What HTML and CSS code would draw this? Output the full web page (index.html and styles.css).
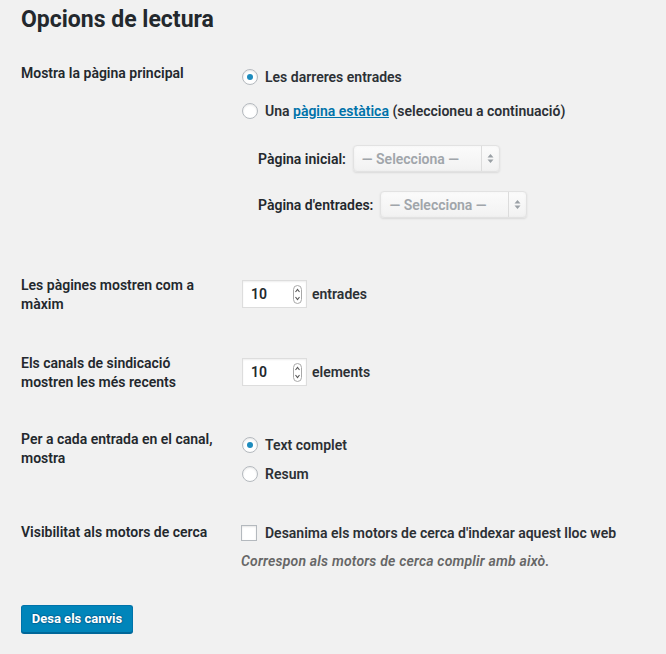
FILE: index.html
```html
<!DOCTYPE html>
<html lang="ca">
<head>
<meta charset="utf-8">
<title>Opcions de lectura</title>
<link rel="stylesheet" href="styles.css">
</head>
<body>
<div class="wrap">
  <h1 class="title">Opcions de lectura</h1>

  <div class="row row-front">
    <div class="th">Mostra la pàgina principal</div>
    <div class="td">
      <div class="opt opt-tall"><span class="radio checked"></span><span>Les darreres entrades</span></div>
      <div class="opt opt-tall"><span class="radio"></span><span>Una <a class="link" href="#">pàgina estàtica</a> (seleccioneu a continuació)</span></div>
      <div class="selrow first">
        <span class="sel-label">Pàgina inicial:</span>
        <span class="select"><span class="sel-text">— Selecciona —</span><span class="sel-arrow"><svg width="7" height="11" viewBox="0 0 7 11"><path d="M3.5 1 L6.5 4.5 H0.5 Z M3.5 10 L6.5 6.5 H0.5 Z" fill="#9aa0a5"/></svg></span></span>
      </div>
      <div class="selrow">
        <span class="sel-label">Pàgina d'entrades:</span>
        <span class="select"><span class="sel-text">— Selecciona —</span><span class="sel-arrow"><svg width="7" height="11" viewBox="0 0 7 11"><path d="M3.5 1 L6.5 4.5 H0.5 Z M3.5 10 L6.5 6.5 H0.5 Z" fill="#9aa0a5"/></svg></span></span>
      </div>
    </div>
  </div>

  <div class="row row-num">
    <div class="th">Les pàgines mostren com a màxim</div>
    <div class="td td-num">
      <span class="num"><span class="num-val">10</span><svg class="spin" width="9" height="19" viewBox="0 0 9 19"><rect x="0.5" y="0.5" width="8" height="18" rx="4" fill="#fff" stroke="#a8a8a8"/><path d="M2.5 7 L4.5 4.5 L6.5 7" fill="none" stroke="#555" stroke-width="1.1"/><path d="M2.5 12 L4.5 14.5 L6.5 12" fill="none" stroke="#555" stroke-width="1.1"/></svg></span>
      <span class="unit">entrades</span>
    </div>
  </div>

  <div class="row row-num row-short">
    <div class="th">Els canals de sindicació mostren les més recents</div>
    <div class="td td-num">
      <span class="num"><span class="num-val">10</span><svg class="spin" width="9" height="19" viewBox="0 0 9 19"><rect x="0.5" y="0.5" width="8" height="18" rx="4" fill="#fff" stroke="#a8a8a8"/><path d="M2.5 7 L4.5 4.5 L6.5 7" fill="none" stroke="#555" stroke-width="1.1"/><path d="M2.5 12 L4.5 14.5 L6.5 12" fill="none" stroke="#555" stroke-width="1.1"/></svg></span>
      <span class="unit">elements</span>
    </div>
  </div>

  <div class="row row-feed">
    <div class="th">Per a cada entrada en el canal, mostra</div>
    <div class="td td-feed">
      <div class="opt"><span class="radio checked"></span><span>Text complet</span></div>
      <div class="opt"><span class="radio"></span><span>Resum</span></div>
    </div>
  </div>

  <div class="row row-vis">
    <div class="th">Visibilitat als motors de cerca</div>
    <div class="td td-vis">
      <div class="opt"><span class="checkbox"></span><span>Desanima els motors de cerca d'indexar aquest lloc web</span></div>
      <p class="desc">Correspon als motors de cerca complir amb això.</p>
    </div>
  </div>

  <div class="submit"><button class="button" type="button">Desa els canvis</button></div>
</div>
</body>
</html>
```

FILE: styles.css
```css
html, body {
  margin: 0;
  padding: 0;
  background: #f1f1f1;
}
body {
  font-family: Roboto, "Liberation Sans", Arial, sans-serif;
  font-size: 14px;
  color: #2c3035;
  font-weight: 600;
}
.wrap {
  padding-left: 21px;
  width: 645px;
}
.title {
  margin: 5px 0 0;
  font-size: 23px;
  line-height: 29px;
  font-weight: 700;
  color: #23282d;
}
.row {
  display: grid;
  grid-template-columns: 220px 1fr;
}
.row-front { margin-top: 10px; }
.th {
  padding: 20px 20px 20px 0;
  line-height: 19px;
  color: #23282d;
}
.row-short .th { padding-bottom: 18px; }
.td { padding-top: 16px; }
.opt {
  display: flex;
  align-items: center;
  height: 29px;
  white-space: nowrap;
}
.opt-tall { height: 34px; }
.radio, .checkbox {
  flex: none;
  width: 14px;
  height: 14px;
  border: 1px solid #b4b9be;
  background: #fff;
  box-shadow: inset 0 1px 2px rgba(0,0,0,0.1);
  margin-right: 8px;
  display: flex;
  align-items: center;
  justify-content: center;
}
.radio {
  border-radius: 50%;
  margin-left: 1px;
  margin-right: 7px;
}
.radio.checked::after {
  content: "";
  width: 6px;
  height: 6px;
  border-radius: 50%;
  background: #1e8cbe;
}
.link {
  color: #0073aa;
  text-decoration: underline;
}
.selrow {
  display: flex;
  align-items: center;
  padding-left: 17px;
  height: 27px;
  margin-top: 19px;
}
.selrow.first { margin-top: 17px; }
.sel-label {
  margin-right: 7px;
  color: #23282d;
}
.select {
  display: flex;
  align-items: stretch;
  width: 145px;
  height: 25px;
  border: 1px solid #e2e2e2;
  border-radius: 4px;
  background: linear-gradient(#fbfbfb, #f2f2f2);
  box-shadow: 0 1px 2px rgba(0,0,0,0.1), inset 0 0 3px rgba(0,0,0,0.04);
}
.sel-text {
  flex: 1;
  display: flex;
  align-items: center;
  padding-left: 8px;
  color: #a0a5aa;
}
.sel-arrow {
  width: 17px;
  border-left: 1px solid #dcdcdc;
  display: flex;
  align-items: center;
  justify-content: center;
}
.row-front .td { padding-bottom: 38px; }
.td-num {
  padding-top: 24px;
  display: flex;
  align-items: flex-start;
}
.num {
  display: flex;
  align-items: center;
  justify-content: space-between;
  height: 26px;
  border: 1px solid #ddd;
  background: #fff;
  box-shadow: inset 0 1px 2px rgba(0,0,0,0.07);
  padding: 0 4px 0 8px;
  width: 51px;
  margin-left: 1px;
}
.num-val { color: #23282d; }
.unit {
  margin-left: 5px;
  line-height: 28px;
}
.td-feed { padding-top: 20px; padding-bottom: 15px; }
.td-vis { padding-top: 15px; }
.desc {
  margin: 0;
  line-height: 28px;
  font-style: italic;
  letter-spacing: 0.2px;
  color: #666;
}
.submit {
  padding-top: 30px;
  padding-bottom: 20px;
}
.button {
  font-family: inherit;
  font-size: 13px;
  font-weight: 700;
  color: #fff;
  background: #0085ba;
  border: 1px solid #0073aa;
  border-bottom-color: #006799;
  border-radius: 3px;
  box-shadow: 0 1px 0 #006799;
  text-shadow: 0 -1px 1px #006799, 1px 0 1px #006799, 0 1px 1px #006799, -1px 0 1px #006799;
  width: 112px;
  height: 28px;
  padding: 0;
  line-height: 26px;
}
```
